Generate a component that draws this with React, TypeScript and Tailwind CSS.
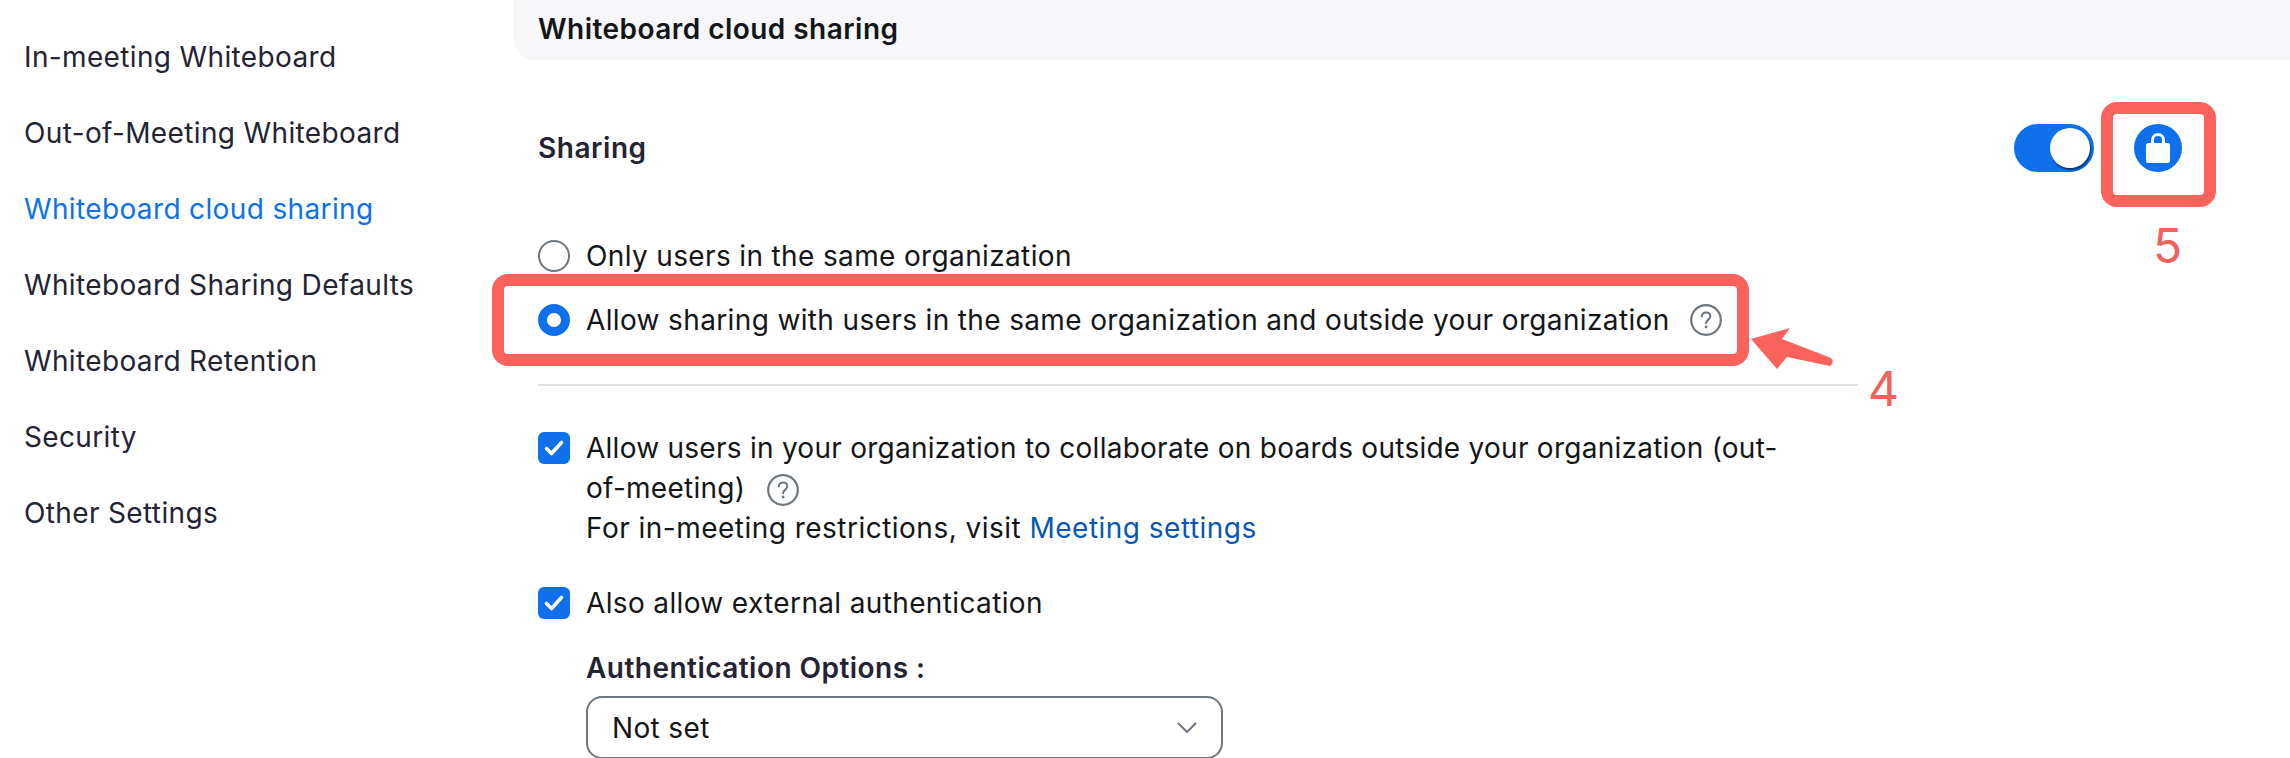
import React from "react";

function Help({ className = "" }: { className?: string }) {
  return (
    <svg viewBox="0 0 32 32" className={`w-8 h-8 shrink-0 ${className}`} fill="none">
      <circle cx="16" cy="16" r="14.8" stroke="#6e7680" strokeWidth="2.2" />
      <path d="M11.8 12.6c0-2.5 1.9-4.2 4.3-4.2s4.2 1.5 4.2 3.8c0 3.4-4 3.4-4.2 7" stroke="#6e7680" strokeWidth="2" strokeLinecap="round" />
      <circle cx="16.1" cy="23" r="1.4" fill="#6e7680" />
    </svg>
  );
}

function Check() {
  return (
    <span className="w-8 h-8 shrink-0 rounded-[6px] bg-[#0e71eb] flex items-center justify-center">
      <svg viewBox="0 0 32 32" className="w-8 h-8" fill="none">
        <path d="M8.5 16.5l5 5L23.5 10.5" stroke="#fff" strokeWidth="3.6" strokeLinecap="round" strokeLinejoin="round" />
      </svg>
    </span>
  );
}

const side = [
  "In-meeting Whiteboard",
  "Out-of-Meeting Whiteboard",
  "Whiteboard cloud sharing",
  "Whiteboard Sharing Defaults",
  "Whiteboard Retention",
  "Security",
  "Other Settings",
];

export default function App() {
  return (
    <div className="relative w-[2290px] h-[758px] overflow-hidden bg-white flex text-[28px] leading-[40px] tracking-[0.36px] text-[#131619] font-['Inter',sans-serif]">
      <nav className="w-[514px] shrink-0 pt-[37px] pl-6 flex flex-col gap-[36px] text-[#232333]">
        {side.map((s, i) => (
          <div key={s} className={i === 2 ? "text-[#0e71eb]" : ""}>{s}</div>
        ))}
      </nav>

      <main className="flex-1 min-w-0">
        <div className="h-[60px] bg-[#f7f7fa] rounded-bl-[20px] pl-6 flex items-center pb-[3px] font-semibold tracking-[0.46px] text-[#131619]">
          Whiteboard cloud sharing
        </div>

        <div className="pl-6">
          <div className="mt-[64px] h-[48px] flex items-center justify-between pr-[108px]">
            <span className="font-semibold tracking-[0.55px] text-[#232333]">Sharing</span>
            <div className="flex items-center gap-10">
              <div className="w-20 h-12 rounded-full bg-[#0e71eb] flex items-center justify-end pr-[4px]">
                <div className="w-10 h-10 rounded-full bg-white shadow-[1px_2px_2px_rgba(4,30,70,0.75)]" />
              </div>
              <svg viewBox="0 0 48 48" className="w-12 h-12">
                <circle cx="24" cy="24" r="24" fill="#0e71eb" />
                <path d="M18.5 21v-5a5.5 5.5 0 0 1 11 0v5" fill="none" stroke="#fff" strokeWidth="3" />
                <rect x="12" y="19" width="24" height="20" rx="2.5" fill="#fff" />
              </svg>
            </div>
          </div>

          <div className="mt-[68px] flex items-center gap-4 h-8">
            <span className="w-8 h-8 shrink-0 rounded-full border-2 border-[#6e7680] bg-white" />
            <span>Only users in the same organization</span>
          </div>

          <div className="mt-8 flex items-center gap-4 h-8">
            <span className="w-8 h-8 shrink-0 rounded-full border-[9px] border-[#0e71eb] bg-white" />
            <span>Allow sharing with users in the same organization and outside your organization</span>
            <Help className="ml-[4px]" />
          </div>

          <div className="mt-[48px] w-[1320px] h-[2px] bg-[#dfe1e6]" />

          <div className="mt-[46px] flex gap-4 w-[1260px]">
            <Check />
            <div className="-mt-1 flex-1">
              <div className="tracking-[0.26px]">Allow users in your organization to collaborate on boards outside your organization (out-of-meeting) <Help className="inline-block align-[-8px] ml-[14px]" /></div>
              <div className="tracking-[0.48px]">
                For in-meeting restrictions, visit <span className="text-[#0956b5]">Meeting settings</span>
              </div>
            </div>
          </div>

          <div className="mt-[39px] flex items-center gap-4 h-8">
            <Check />
            <span>Also allow external authentication</span>
          </div>

          <div className="ml-[48px]">
            <div className="mt-[29px] font-semibold tracking-[0.46px] text-[#232333]">Authentication Options :</div>
            <div className="mt-[8px] w-[637px] h-[63px] rounded-[16px] border-2 border-[#6e7680] flex items-center justify-between pl-[24px] pr-[24px]">
              <span>Not set</span>
              <svg viewBox="0 0 20 12" className="w-5 h-3" fill="none">
                <path d="M1.5 1.5L10 10l8.5-8.5" stroke="#6e7680" strokeWidth="2" strokeLinecap="round" strokeLinejoin="round" />
              </svg>
            </div>
          </div>
        </div>
      </main>

      {/* annotations over the page */}
      <div className="absolute left-[492px] top-[274px] w-[1257px] h-[92px] border-[12px] border-[#fb625b] rounded-[16px]" />
      <div className="absolute left-[2101px] top-[102px] w-[115px] h-[105px] border-[12px] border-[#fb625b] rounded-[16px]" />
      <svg className="absolute left-[1745px] top-[320px]" width="96" height="56" viewBox="1745 320 96 56">
        <path d="M1751 339L1790 328L1782 339L1831 358Q1835 362 1830 366L1787 357L1777 369Z" fill="#fb625b" />
      </svg>
      <div className="absolute left-[1868px] top-[360px] text-[48px] leading-[58px] tracking-normal text-[#f0625c]">4</div>
      <div className="absolute left-[2153px] top-[217px] text-[48px] leading-[58px] tracking-normal text-[#f0625c]">5</div>
    </div>
  );
}
